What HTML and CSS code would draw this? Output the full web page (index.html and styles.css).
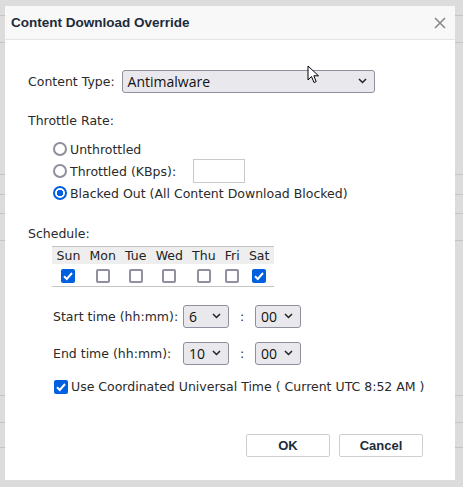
FILE: index.html
```html
<!DOCTYPE html>
<html>
<head>
<meta charset="utf-8">
<link rel="stylesheet" href="styles.css">
</head>
<body>
<div class="backdrop">
  <div class="dialog">
    <div class="header">
      <span class="title">Content Download Override</span>
      <svg class="close" width="12" height="12" viewBox="0 0 12 12"><path d="M1 1L11 11M11 1L1 11" stroke="#8a8a8a" stroke-width="1.6"/></svg>
    </div>
    <div class="body">
      <div class="row-type">
        <span class="label">Content Type:</span>
        <div class="select wide"><span>Antimalware</span><svg class="chev" width="9" height="6" viewBox="0 0 9 6"><path d="M1 1L4.5 4.5L8 1" fill="none" stroke="#222" stroke-width="1.5"/></svg></div>
        <svg class="cursor" width="14" height="20" viewBox="0 0 14 20"><path d="M1 1L1 15L4.5 11.5L7 17.5L9.2 16.6L6.8 10.8L11.5 10.8Z" fill="#fff" stroke="#000" stroke-width="1"/></svg>
      </div>
      <div class="section-label">Throttle Rate:</div>
      <div class="radios">
        <div class="radio-row"><span class="radio"></span><span>Unthrottled</span></div>
        <div class="radio-row"><span class="radio"></span><span>Throttled (KBps):</span><span class="kbps"></span></div>
        <div class="radio-row"><span class="radio on"></span><span>Blacked Out (All Content Download Blocked)</span></div>
      </div>
      <div class="section-label sched">Schedule:</div>
      <table class="days">
        <tr class="head"><th>Sun</th><th>Mon</th><th>Tue</th><th>Wed</th><th>Thu</th><th>Fri</th><th>Sat</th></tr>
        <tr class="checks">
          <td><span class="cb on"></span></td>
          <td><span class="cb"></span></td>
          <td><span class="cb"></span></td>
          <td><span class="cb"></span></td>
          <td><span class="cb"></span></td>
          <td><span class="cb"></span></td>
          <td><span class="cb on"></span></td>
        </tr>
      </table>
      <div class="time-row">
        <span class="time-label">Start time (hh:mm):</span>
        <div class="select small"><span>6</span><svg class="chev" width="9" height="6" viewBox="0 0 9 6"><path d="M1 1L4.5 4.5L8 1" fill="none" stroke="#222" stroke-width="1.5"/></svg></div>
        <span class="colon">:</span>
        <div class="select small"><span>00</span><svg class="chev" width="9" height="6" viewBox="0 0 9 6"><path d="M1 1L4.5 4.5L8 1" fill="none" stroke="#222" stroke-width="1.5"/></svg></div>
      </div>
      <div class="time-row end">
        <span class="time-label">End time (hh:mm):</span>
        <div class="select small"><span>10</span><svg class="chev" width="9" height="6" viewBox="0 0 9 6"><path d="M1 1L4.5 4.5L8 1" fill="none" stroke="#222" stroke-width="1.5"/></svg></div>
        <span class="colon">:</span>
        <div class="select small"><span>00</span><svg class="chev" width="9" height="6" viewBox="0 0 9 6"><path d="M1 1L4.5 4.5L8 1" fill="none" stroke="#222" stroke-width="1.5"/></svg></div>
      </div>
      <div class="utc-row"><span class="cb on"></span><span>Use Coordinated Universal Time ( Current UTC 8:52 AM )</span></div>
      <div class="buttons">
        <button class="btn">OK</button>
        <button class="btn">Cancel</button>
      </div>
    </div>
  </div>
</div>
</body>
</html>
```
FILE: styles.css
```css
* { box-sizing: border-box; }
html, body { margin: 0; padding: 0; }
body {
  width: 463px;
  height: 487px;
  overflow: hidden;
  background-color: #dcdcdc;
  background-image:
    linear-gradient(#c4c4c4, #c4c4c4),
    linear-gradient(#c4c4c4, #c4c4c4),
    linear-gradient(#c4c4c4, #c4c4c4),
    linear-gradient(#c4c4c4, #c4c4c4),
    linear-gradient(#c4c4c4, #c4c4c4),
    linear-gradient(#c4c4c4, #c4c4c4),
    linear-gradient(#c4c4c4, #c4c4c4),
    linear-gradient(#c4c4c4, #c4c4c4),
    linear-gradient(#c4c4c4, #c4c4c4);
  background-size: 100% 1px;
  background-repeat: no-repeat;
  background-position: 0 15px, 0 42px, 0 174px, 0 194px, 0 213px, 0 240px, 0 395px, 0 422px, 0 447px;
  font-family: "DejaVu Sans", Verdana, sans-serif;
  color: #222;
}
.backdrop {
  padding: 6px 8px 0 5px;
}
.dialog {
  width: 450px;
  height: 474px;
  background: #fff;
  display: flex;
  flex-direction: column;
}
.header {
  height: 34px;
  background: #f8f8f8;
  border-bottom: 1px solid #e4e4e4;
  display: flex;
  align-items: center;
  justify-content: space-between;
  padding: 0 9px 0 6px;
}
.title {
  font-family: "Liberation Sans", Arial, sans-serif;
  font-weight: bold;
  font-size: 13.5px;
  color: #1d2b3a;
}
.close { display: block; }
.body {
  padding: 30px 0 0 23px;
  font-size: 12.5px;
  color: #2a2a2a;
  flex: 1;
  display: flex;
  flex-direction: column;
  align-items: flex-start;
}
.row-type {
  display: flex;
  align-items: center;
  position: relative;
  height: 22px;
}
.label { margin-right: 7px; }
.select {
  display: flex;
  align-items: center;
  justify-content: space-between;
  height: 23px;
  background: #e9e9ed;
  border: 1px solid #8f8f9d;
  border-radius: 3px;
  font-family: "Open Sans", "Noto Sans", sans-serif;
  font-size: 14px;
  color: #111;
  padding: 0 7px 0 5px;
}
.select.wide { width: 253px; }
.select.small { width: 46px; padding-left: 5px; }
.chev { display: block; }
.cursor {
  position: absolute;
  left: 279px;
  top: -5px;
}
.section-label {
  margin-top: 20px;
  line-height: 18px;
}
.radios {
  padding-left: 25px;
  margin-top: 8px;
  display: flex;
  flex-direction: column;
}
.radio-row {
  display: flex;
  align-items: center;
  height: 22px;
  white-space: nowrap;
}
.radio {
  width: 14px;
  height: 14px;
  border: 2px solid #8f8f9d;
  border-radius: 50%;
  margin-right: 3px;
  background: #fff;
}
.radio.on {
  border-color: #0060df;
  background: radial-gradient(circle, #0060df 0 3px, #fff 3.5px);
}
.kbps {
  width: 52px;
  height: 24px;
  border: 1px solid #c9c9c9;
  margin-left: 17px;
}
.sched { margin-top: 21px; }
.days {
  border-collapse: collapse;
  margin: 3px 0 0 24px;
  border-top: 1px solid #c4c4c4;
  border-bottom: 1px solid #c4c4c4;
}
.days th {
  background: #eeeeee;
  font-weight: normal;
  font-size: 12.5px;
  height: 17px;
  padding: 0 4.6px;
  color: #222;
}
.days td {
  text-align: center;
  height: 23px;
  padding: 0;
}
.cb {
  display: inline-block;
  width: 14px;
  height: 14px;
  border: 2px solid #8f8f9d;
  border-radius: 2px;
  vertical-align: middle;
  background: #fff;
}
.cb.on {
  border: none;
  background: #0060df url("data:image/svg+xml,%3Csvg xmlns='http://www.w3.org/2000/svg' width='14' height='14'%3E%3Cpath d='M3 7.2L5.8 10L11 4' fill='none' stroke='white' stroke-width='2'/%3E%3C/svg%3E") no-repeat center;
}
.time-row {
  display: flex;
  align-items: center;
  margin-top: 18px;
  padding-left: 25px;
  height: 22px;
  white-space: nowrap;
}
.time-row.end { margin-top: 15px; }
.time-label { width: 130px; flex: none; }
.colon { width: 26px; text-align: center; }
.utc-row {
  display: flex;
  align-items: center;
  margin-top: 15px;
  padding-left: 26px;
  gap: 3px;
  white-space: nowrap;
}
.buttons {
  display: flex;
  gap: 9px;
  margin-top: 40px;
  padding-left: 218px;
}
.btn {
  width: 84px;
  height: 23px;
  background: #fff;
  border: 1px solid #cfcfcf;
  border-radius: 2px;
  font-family: "Liberation Sans", Arial, sans-serif;
  font-weight: bold;
  font-size: 13px;
  color: #1d2b3a;
}
```
